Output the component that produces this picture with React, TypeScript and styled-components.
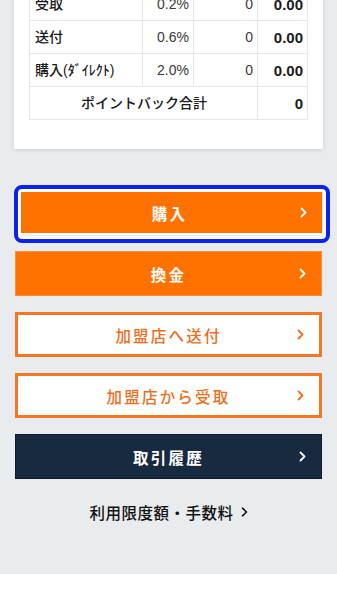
import styled, { createGlobalStyle } from 'styled-components';

let GlobalStyle = createGlobalStyle`
  html, body {
    margin: 0;
    padding: 0;
    background: #ffffff;
  }
  body {
    font-family: "Liberation Sans", "Noto Sans CJK JP", sans-serif;
    color: #1a1a1a;
    -webkit-font-smoothing: antialiased;
  }
  * {
    box-sizing: border-box;
  }
`;

let Page = styled.div`
  background: #e9ecef;
  padding: 0 0 51px;
  /* the view is scrolled a little: the top of the table sits above the window */
  margin-top: -13px;
  overflow: hidden;
`;

let Card = styled.div`
  margin: 0 14px 0 14px;
  background: #ffffff;
  padding: 0 16px 29px 15px;
  box-shadow: 0 1px 5px rgba(0, 0, 0, 0.12);
`;

let Table = styled.table`
  width: 100%;
  border-collapse: collapse;
  table-layout: fixed;
`;

let Cell = styled.td<{ $align?: 'left' | 'right' | 'center'; $bold?: boolean; $muted?: boolean }>`
  height: 33px;
  padding: 0 4px 0 5px;
  border: 1px solid #e4e6e8;
  font-size: 14px;
  line-height: 1;
  text-align: ${p => p.$align || 'left'};
  font-weight: ${p => (p.$bold ? 700 : 500)};
  color: ${p => (p.$muted ? '#3a3a3a' : '#1a1a1a')};
  white-space: nowrap;
  overflow: hidden;
`;

let NumCell = styled(Cell)`
  font-size: ${p => (p.$bold ? 15 : 14)}px;
  font-weight: ${p => (p.$bold ? 700 : 400)};
`;

let Actions = styled.div`
  display: flex;
  flex-direction: column;
  gap: 16px;
  padding: 41px 15px 0;
`;

type Variant = 'solid' | 'outline' | 'dark';

let ActionButton = styled.button<{ $variant: Variant; $focused?: boolean }>`
  position: relative;
  display: grid;
  grid-template-columns: 1fr auto 1fr;
  align-items: center;
  width: 100%;
  height: 45px;
  padding: 0 15px;
  margin: 0;
  border-radius: 0;
  font-family: "Noto Sans CJK JP", sans-serif;
  font-size: 15.5px;
  letter-spacing: 2.2px;
  cursor: pointer;
  border: ${p =>
    p.$focused
      ? '2px solid #ffffff'
      : p.$variant === 'outline'
      ? '3px solid #f57623'
      : p.$variant === 'dark'
      ? '1px solid #0e1a2a'
      : '1px solid #ff8a3c'};
  border-right-width: ${p => (p.$focused ? 0 : '')};
  background: ${p =>
    p.$variant === 'outline' ? '#ffffff' : p.$variant === 'dark' ? '#182a40' : '#ff7200'};
  color: ${p => (p.$variant === 'outline' ? '#f06d1c' : '#ffffff')};
  font-weight: ${p => (p.$variant === 'outline' ? 500 : 700)};

  ${p =>
    p.$focused &&
    `
    &::after {
      content: '';
      position: absolute;
      top: -7px;
      bottom: -10px;
      left: -3px;
      right: -8px;
      border: 4px solid #0b22f2;
      border-radius: 8px;
      box-shadow: inset 0 0 0 3px #ffffff;
      pointer-events: none;
    }
  `}
`;

let Label = styled.span`
  grid-column: 2;
`;

let Chevron = styled.svg`
  grid-column: 3;
  justify-self: end;
`;

let LimitLink = styled.a`
  display: flex;
  align-items: center;
  justify-content: center;
  gap: 7px;
  margin-top: 22px;
  font-family: "Noto Sans CJK JP", sans-serif;
  font-size: 15.5px;
  font-weight: 500;
  letter-spacing: 0.5px;
  color: #111111;
  text-decoration: none;
`;

let rows = [
  { label: '受取', rate: '0.2%', count: '0', amount: '0.00' },
  { label: '送付', rate: '0.6%', count: '0', amount: '0.00' },
  { label: '購入(ﾀﾞｲﾚｸﾄ)', rate: '2.0%', count: '0', amount: '0.00' },
];

let ChevronIcon = () => (
  <Chevron width="7" height="11" viewBox="0 0 7 11" fill="none">
    <polyline
      points="1.5,1.5 5.5,5.5 1.5,9.5"
      stroke="currentColor"
      strokeWidth="1.8"
      strokeLinecap="round"
      strokeLinejoin="round"
    />
  </Chevron>
);

let Action = ({ variant, label, focused }: { variant: Variant; label: string; focused?: boolean }) => (
  <ActionButton $variant={variant} $focused={focused}>
    <Label>{label}</Label>
    <ChevronIcon />
  </ActionButton>
);

export default function App() {
  return (
    <>
      <GlobalStyle />
      <Page>
        <Card>
          <Table>
            <colgroup>
              <col style={{ width: 113 }} />
              <col style={{ width: 51 }} />
              <col style={{ width: 64 }} />
              <col style={{ width: 50 }} />
            </colgroup>
            <tbody>
              {rows.map(r => (
                <tr key={r.label}>
                  <Cell>{r.label}</Cell>
                  <NumCell $align="right" $muted>
                    {r.rate}
                  </NumCell>
                  <NumCell $align="right" $muted>
                    {r.count}
                  </NumCell>
                  <NumCell $align="right" $bold>
                    {r.amount}
                  </NumCell>
                </tr>
              ))}
              <tr>
                <Cell colSpan={3} $align="center">
                  ポイントバック合計
                </Cell>
                <NumCell $align="right" $bold>
                  0
                </NumCell>
              </tr>
            </tbody>
          </Table>
        </Card>

        <Actions>
          <Action variant="solid" label="購入" focused />
          <Action variant="solid" label="換金" />
          <Action variant="outline" label="加盟店へ送付" />
          <Action variant="outline" label="加盟店から受取" />
          <Action variant="dark" label="取引履歴" />
        </Actions>

        <LimitLink href="#">
          利用限度額・手数料
          <svg width="7" height="10" viewBox="0 0 7 10" fill="none">
            <polyline
              points="1.5,1.2 5.5,5 1.5,8.8"
              stroke="currentColor"
              strokeWidth="1.6"
              strokeLinecap="round"
              strokeLinejoin="round"
            />
          </svg>
        </LimitLink>
      </Page>
    </>
  );
}
